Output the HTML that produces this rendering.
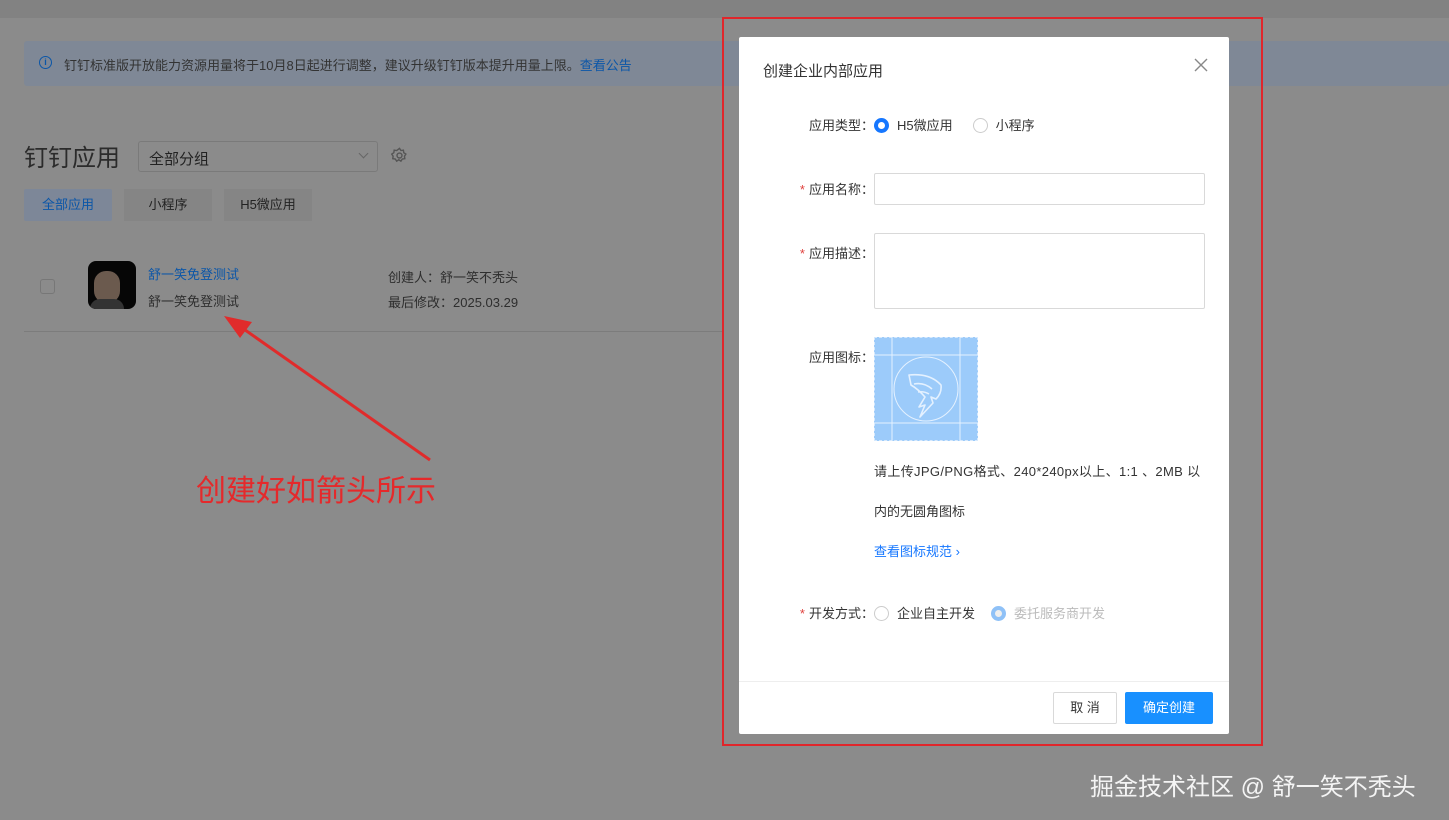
<!DOCTYPE html>
<html><head><meta charset="utf-8"><style>
*{margin:0;padding:0;box-sizing:border-box}
body{width:1449px;height:820px;overflow:hidden;background:#8b8b8b;font-family:"Liberation Sans","Noto Sans CJK SC",sans-serif;position:relative;color:#333}
.a{position:absolute}
.t{font-size:13px;color:#2b2b2b;white-space:nowrap}
.lbl{position:absolute;font-size:13px;color:#333;text-align:right;width:90px;white-space:nowrap}
.req{color:#e0403c;margin-right:4px}
.radio{display:inline-block;width:15px;height:15px;border-radius:50%;border:1px solid #ccc;vertical-align:-3px;margin-right:8px;background:#fff}
</style></head><body>
<div class="a" style="left:0;top:0;width:1449px;height:18px;background:#828282"></div>
<div class="a" style="left:24px;top:41px;width:1425px;height:45px;background:#7f8896;border-radius:3px"></div>
<div class="a" style="left:39px;top:56px;width:13px;height:13px;border:1.3px solid #0b56a8;border-radius:50%;font-size:9px;color:#0b56a8;text-align:center;line-height:11px;font-weight:bold">i</div>
<div class="a t" style="left:64px;top:55px;color:#333">钉钉标准版开放能力资源用量将于10月8日起进行调整，建议升级钉钉版本提升用量上限。<span style="color:#0b56a8">查看公告</span></div>
<div class="a" style="left:24px;top:138px;font-size:24px;color:#2b2b2b">钉钉应用</div>
<div class="a" style="left:138px;top:141px;width:240px;height:31px;border:1px solid #7a7a7a;border-radius:3px;background:#8b8b8b"></div>
<div class="a t" style="left:149px;top:148px;font-size:15px;color:#222">全部分组</div>
<div class="a" style="left:360px;top:150px;width:7px;height:7px;border-right:1px solid #666;border-bottom:1px solid #666;transform:rotate(45deg)"></div>
<svg class="a" style="left:391px;top:147px" width="17" height="17" viewBox="0 0 24 24" fill="none" stroke="#555" stroke-width="2"><path d="M12 2l2 3 3.5-.5.5 3.5 3 2-2 3 .5 3.5-3.5.5-2 3-3-2-3 2-2-3-3.5-.5.5-3.5-2-3 3-2 .5-3.5 3.5.5z"/><circle cx="12" cy="12" r="3.5"/></svg>
<div class="a" style="left:24px;top:189px;width:88px;height:32px;background:#7d8798;border-radius:2px;font-size:13px;color:#0b56a8;text-align:center;line-height:32px">全部应用</div>
<div class="a" style="left:124px;top:189px;width:88px;height:32px;background:#858585;font-size:13px;color:#222;text-align:center;line-height:32px">小程序</div>
<div class="a" style="left:224px;top:189px;width:88px;height:32px;background:#858585;font-size:13px;color:#222;text-align:center;line-height:32px">H5微应用</div>
<div class="a" style="left:40px;top:279px;width:15px;height:15px;border:1px solid #777;border-radius:3px"></div>
<div class="a" style="left:88px;top:261px;width:48px;height:48px;background:#060606;border-radius:8px;overflow:hidden"><div style="position:absolute;left:6px;top:10px;width:26px;height:32px;background:#6b5a4e;border-radius:12px"></div><div style="position:absolute;left:2px;top:38px;width:34px;height:14px;background:#333;border-radius:10px 10px 0 0"></div></div>
<div class="a t" style="left:148px;top:264px;color:#0b56a8">舒一笑免登测试</div>
<div class="a t" style="left:148px;top:291px;color:#2e2e2e">舒一笑免登测试</div>
<div class="a t" style="left:388px;top:267px;color:#2e2e2e">创建人：舒一笑不秃头</div>
<div class="a t" style="left:388px;top:292px;color:#2e2e2e">最后修改：2025.03.29</div>
<div class="a" style="left:24px;top:331px;width:700px;height:1px;background:#7c7c7c"></div>
<svg class="a" style="left:0;top:0" width="720" height="820"><line x1="430" y1="460" x2="238" y2="325" stroke="#e02b2b" stroke-width="3"/><polygon points="224,316 252,322 240,338" fill="#e02b2b"/></svg>
<div class="a" style="left:196px;top:466px;font-size:30px;color:#e5292b">创建好如箭头所示</div>

<div class="a" style="left:739px;top:37px;width:490px;height:697px;background:#fff;border-radius:2px"></div>
<div class="a" style="left:722px;top:17px;width:541px;height:729px;border:2px solid #e0262b"></div>
<div class="a" style="left:763px;top:60px;font-size:15px;color:#333">创建企业内部应用</div>
<svg class="a" style="left:1194px;top:58px" width="14" height="14"><path d="M1 1L13 13M13 1L1 13" stroke="#888" stroke-width="1.4"/></svg>
<div class="lbl" style="left:784px;top:115px">应用类型：</div>
<div class="a t" style="left:874px;top:115px;color:#333"><span class="radio" style="border:4px solid #1677ff"></span>H5微应用<span class="radio" style="margin-left:20px"></span>小程序</div>
<div class="lbl" style="left:784px;top:179px"><span class="req">*</span>应用名称：</div>
<div class="a" style="left:874px;top:173px;width:331px;height:32px;border:1px solid #d9d9d9;border-radius:2px"></div>
<div class="lbl" style="left:784px;top:243px"><span class="req">*</span>应用描述：</div>
<div class="a" style="left:874px;top:233px;width:331px;height:76px;border:1px solid #d9d9d9;border-radius:2px"></div>
<div class="lbl" style="left:784px;top:347px">应用图标：</div>
<div class="a" style="left:874px;top:337px;width:104px;height:104px;background:#9ccbfa;border:1px dashed #d6e9fd"></div>
<svg class="a" style="left:874px;top:337px" width="104" height="104"><g stroke="#e4f1ff" stroke-width="1" fill="none"><line x1="0" y1="18" x2="104" y2="18"/><line x1="0" y1="86" x2="104" y2="86"/><line x1="18" y1="0" x2="18" y2="104"/><line x1="86" y1="0" x2="86" y2="104"/><circle cx="52" cy="52" r="32"/><g stroke-width="1.6" stroke-linejoin="round"><path d="M35 38 Q56 36 67 48 Q68 56 62 62 L57 60 L59 66 L46 80 L51 68 L45 70 L51 60 Q44 52 37 48 Z"/><path d="M40 47 Q50 45 58 52"/><path d="M44 55 Q50 54 55 57"/></g></g></svg>
<div class="a t" style="left:874px;top:461px;color:#333;letter-spacing:0.35px">请上传JPG/PNG格式、240*240px以上、1:1 、2MB 以</div>
<div class="a t" style="left:874px;top:501px;color:#333">内的无圆角图标</div>
<div class="a t" style="left:874px;top:541px;color:#1677ff">查看图标规范 ›</div>
<div class="lbl" style="left:784px;top:603px"><span class="req">*</span>开发方式：</div>
<div class="a t" style="left:874px;top:603px;color:#333"><span class="radio"></span>企业自主开发<span class="radio" style="margin-left:16px;border:4px solid #8fc1f7;background:#eee"></span><span style="color:#bbb">委托服务商开发</span></div>
<div class="a" style="left:739px;top:681px;width:490px;height:1px;background:#eee"></div>
<div class="a" style="left:1053px;top:692px;width:64px;height:32px;border:1px solid #d9d9d9;border-radius:2px;font-size:13px;text-align:center;line-height:30px;color:#333">取 消</div>
<div class="a" style="left:1125px;top:692px;width:88px;height:32px;background:#1890ff;border-radius:2px;font-size:13px;text-align:center;line-height:32px;color:#fff">确定创建</div>
<div class="a" style="left:1090px;top:767px;font-size:24px;color:#f4f4f4">掘金技术社区 @ 舒一笑不秃头</div>
</body></html>
